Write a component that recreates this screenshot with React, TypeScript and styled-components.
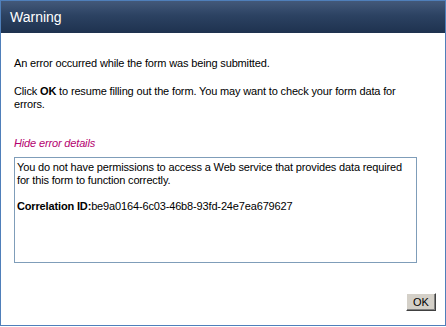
import React from "react";
import styled, { createGlobalStyle } from "styled-components";

const Global = createGlobalStyle`
  html, body { margin: 0; padding: 0; background: #ffffff; }
  body { font-family: "Liberation Sans", Arial, sans-serif; }
`;

const Dialog = styled.div`
  box-sizing: border-box;
  width: 446px;
  height: 326px;
  border: 1px solid #4f7fba;
  display: flex;
  flex-direction: column;
  background: #ffffff;
`;

const TitleBar = styled.div`
  height: 32px;
  flex: none;
  display: flex;
  align-items: center;
  padding-left: 9px;
  background: linear-gradient(to bottom, #43597a 0%, #2c4262 45%, #1e324f 100%);
  color: #ffffff;
  font-size: 14px;
`;

const Body = styled.div`
  flex: 1;
  display: flex;
  flex-direction: column;
  padding: 24px 9px 0 13px;
  font-size: 11px;
  line-height: 13px;
  color: #000000;
  letter-spacing: -0.15px;
`;

const Para = styled.p<{ $gap: number }>`
  margin: 0 0 ${(p) => p.$gap}px 0;
  white-space: nowrap;
`;

const DetailsLink = styled.a`
  color: #b4006e;
  font-style: italic;
  text-decoration: none;
  cursor: pointer;
  margin-bottom: 7px;
`;

const DetailsBox = styled.div`
  box-sizing: border-box;
  width: 403px;
  height: 106px;
  border: 1px solid #7f9db9;
  padding: 3px 2px;
`;

const Footer = styled.div`
  display: flex;
  justify-content: flex-end;
  padding-top: 30px;
`;

const Button = styled.button`
  box-sizing: border-box;
  width: 30px;
  height: 18px;
  padding: 0;
  font-family: "Liberation Sans", Arial, sans-serif;
  font-size: 11px;
  color: #000000;
  background: #d4d0c8;
  border: 1px solid;
  border-color: #ffffff #404040 #404040 #ffffff;
  box-shadow: inset -1px -1px 0 #808080;
`;

export default function App() {
  return (
    <>
      <Global />
      <Dialog>
        <TitleBar>Warning</TitleBar>
        <Body>
          <Para $gap={15}>An error occurred while the form was being submitted.</Para>
          <Para $gap={26}>
            Click <b>OK</b> to resume filling out the form. You may want to check your form data for
            <br />
            errors.
          </Para>
          <DetailsLink>Hide error details</DetailsLink>
          <DetailsBox>
            <Para $gap={13}>
              You do not have permissions to access a Web service that provides data required
              <br />
              for this form to function correctly.
            </Para>
            <Para $gap={0}>
              <b>Correlation ID:</b>be9a0164-6c03-46b8-93fd-24e7ea679627
            </Para>
          </DetailsBox>
          <Footer>
            <Button>OK</Button>
          </Footer>
        </Body>
      </Dialog>
    </>
  );
}
